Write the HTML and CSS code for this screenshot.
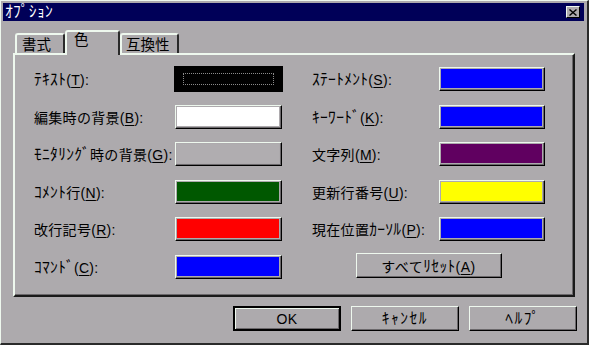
FILE: index.html
```html
<!DOCTYPE html>
<html lang="ja">
<head>
    <meta charset="UTF-8">
    <title>ｵﾌﾟｼｮﾝ</title>
    <link rel="stylesheet" href="styles.css">
</head>
<body>
    <div class="window">
        <div class="titlebar">
            <span class="title"><span class="hk">ｵﾌﾟｼｮﾝ</span></span>
            <span class="close">
                <svg width="8" height="7" viewBox="0 0 8 7"><path d="M0.5 0.5L7.5 6.5M7.5 0.5L0.5 6.5" stroke="#000" stroke-width="1.4"/></svg>
            </span>
        </div>

        <div class="content">
            <div class="tabs">
                <div class="tab first">書式</div>
                <div class="tab active">色</div>
                <div class="tab last">互換性</div>
            </div>

            <div class="panel">
                <div class="grid">
                    <span class="label"><span class="hk">ﾃｷｽﾄ</span>(<u>T</u>):</span>
                    <span class="swatch focused"><span class="fill black"><span class="dots"></span></span></span>
                    <span class="label"><span class="hk">ｽﾃｰﾄﾒﾝﾄ</span>(<u>S</u>):</span>
                    <span class="swatch"><span class="fill blue"></span></span>

                    <span class="label">編集時の背景(<u>B</u>):</span>
                    <span class="swatch"><span class="fill white"></span></span>
                    <span class="label"><span class="hk">ｷｰﾜｰﾄﾞ</span>(<u>K</u>):</span>
                    <span class="swatch"><span class="fill blue"></span></span>

                    <span class="label"><span class="hk">ﾓﾆﾀﾘﾝｸﾞ</span>時の背景(<u>G</u>):</span>
                    <span class="swatch"><span class="fill gray"></span></span>
                    <span class="label">文字列(<u>M</u>):</span>
                    <span class="swatch"><span class="fill purple"></span></span>

                    <span class="label"><span class="hk">ｺﾒﾝﾄ</span>行(<u>N</u>):</span>
                    <span class="swatch"><span class="fill green"></span></span>
                    <span class="label">更新行番号(<u>U</u>):</span>
                    <span class="swatch"><span class="fill yellow"></span></span>

                    <span class="label">改行記号(<u>R</u>):</span>
                    <span class="swatch"><span class="fill red"></span></span>
                    <span class="label">現在位置<span class="hk">ｶｰｿﾙ</span>(<u>P</u>):</span>
                    <span class="swatch"><span class="fill blue"></span></span>

                    <span class="label"><span class="hk">ｺﾏﾝﾄﾞ</span>(<u>C</u>):</span>
                    <span class="swatch"><span class="fill blue"></span></span>
                    <span class="reset-cell"><button class="btn reset">すべて<span class="hk">ﾘｾｯﾄ</span>(<u>A</u>)</button></span>
                </div>
            </div>

            <div class="actions">
                <button class="btn default">OK</button>
                <button class="btn"><span class="hk">ｷｬﾝｾﾙ</span></button>
                <button class="btn"><span class="hk">ﾍﾙﾌﾟ</span></button>
            </div>
        </div>
    </div>
</body>
</html>
```

FILE: styles.css
```css
body {
    margin: 0;
    background: #adaaad;
    font-family: "Liberation Sans", "Noto Sans CJK JP", sans-serif;
    color: #000;
}
.window {
    width: 589px;
    height: 345px;
    box-sizing: border-box;
    border-style: solid;
    border-width: 1px 2px 2px 1px;
    border-color: #eef8ee #2a2a2a #2a2a2a #eef8ee;
    padding: 2px 3px 0 2px;
    background: #adaaad;
}
.titlebar {
    height: 18px;
    background: #000058;
    display: flex;
    align-items: center;
    justify-content: space-between;
    padding: 0 4px 0 2px;
}
.title {
    color: #fff;
    font-size: 14px;
    line-height: 18px;
}
.close {
    width: 14px;
    height: 12px;
    box-sizing: border-box;
    background: #adaaad;
    border: 1px solid;
    border-color: #eef8ee #000 #000 #eef8ee;
    display: flex;
    align-items: center;
    justify-content: center;
}

/* half-width katakana: bigger so they stand as tall as the kanji */
.hk {
    font-size: 15.5px;
    letter-spacing: 0.3px;
    line-height: 1;
}

/* tabs + panel */
.content {
    padding: 9px 0 0 10px;
}
.tabs {
    display: flex;
    align-items: flex-end;
    height: 23px;
    padding-left: 2px;
}
.tab {
    height: 20px;
    box-sizing: border-box;
    font-size: 14.5px;
    line-height: 20px;
    white-space: nowrap;
    border-style: solid;
    border-width: 2px 2px 0 2px;
    border-color: #eef8ee #2a2a2a transparent #eef8ee;
    border-radius: 3px 3px 0 0;
}
.tab.first {
    width: 50px;
    padding-left: 5px;
}
.tab.active {
    width: 55px;
    height: 25px;
    margin-bottom: -2px;
    padding-left: 7px;
    line-height: 17px;
    background: #adaaad;
    position: relative;
    z-index: 1;
}
.tab.last {
    width: 59px;
    padding-left: 4px;
}
.panel {
    width: 562px;
    height: 244px;
    box-sizing: border-box;
    border-style: solid;
    border-width: 2px;
    border-color: #eef8ee #1a1a1a #1a1a1a #eef8ee;
    box-shadow: inset -1px -1px #6b686b;
    padding: 12px 0 0 19px;
}
.grid {
    display: grid;
    grid-template-columns: 141px 107px 30px 127px 106px;
    grid-auto-rows: 24px;
    row-gap: 13.6px;
    align-items: center;
}
.grid .swatch:nth-child(4n+2) {
    grid-column: 2;
}
.grid .label:nth-child(4n+3) {
    grid-column: 4;
}
.label {
    font-size: 14px;
    letter-spacing: 0.3px;
    line-height: 24px;
    padding-top: 2px;
    white-space: nowrap;
}
u {
    text-decoration-thickness: 1px;
    text-underline-offset: 2px;
}
.swatch {
    height: 24px;
    box-sizing: border-box;
    border: 1px solid;
    border-color: #eef8ee #000 #000 #eef8ee;
    box-shadow: inset -1px -1px #6b686b;
    padding: 1px 2px 2px 1px;
    display: flex;
}
.swatch.focused {
    outline: 1px solid #000;
    border-color: #000;
    border-width: 2px;
    padding: 0;
    box-shadow: inset 1px 1px #eef8ee, inset -1px -1px #6b686b;
}
.fill {
    flex: 1;
    display: flex;
}
.fill.black  { background: #000; padding: 4px 6px; }
.fill.white  { background: #fff; }
.fill.gray   { background: #b0adb0; }
.fill.green  { background: #005800; }
.fill.red    { background: #ff0000; }
.fill.blue   { background: #0000ff; }
.fill.purple { background: #600060; }
.fill.yellow { background: #ffff00; }
.dots {
    flex: 1;
    border: 1px dotted #8a8a8a;
}

.reset-cell {
    grid-column: 4 / 6;
    display: flex;
    justify-content: center;
}

.btn {
    font-family: inherit;
    font-size: 14px;
    color: #000;
    background: #adaaad;
    height: 25px;
    box-sizing: border-box;
    border: 1px solid;
    border-color: #eef8ee #000 #000 #eef8ee;
    box-shadow: inset -1px -1px #6b686b;
    padding: 0;
}
.btn.reset {
    width: 146px;
    margin-top: -2px;
    letter-spacing: 0.5px;
}
.actions {
    display: flex;
    justify-content: flex-end;
    gap: 10px;
    margin-top: 9px;
    padding-right: 7px;
}
.actions .btn {
    width: 108px;
    letter-spacing: 0.5px;
}
.actions .hk {
    letter-spacing: 1.5px;
}
.btn.default {
    border: 2px solid;
    border-color: #000;
    box-shadow: inset 1px 1px #eef8ee, inset -1px -1px #6b686b;
}
```
